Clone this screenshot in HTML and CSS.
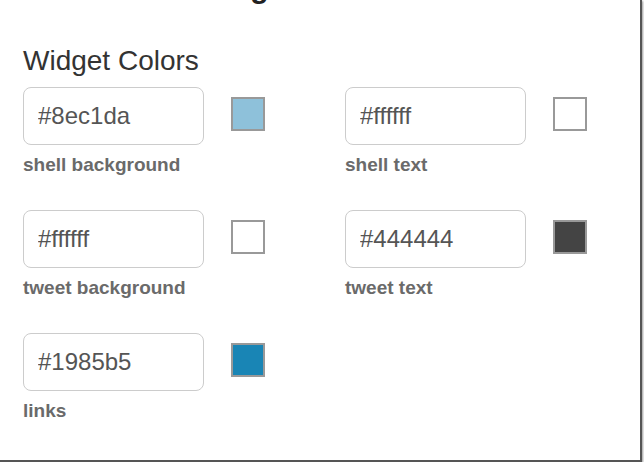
FILE: index.html
```html
<!DOCTYPE html>
<html lang="en">
<head>
    <meta charset="UTF-8">
    <meta name="viewport" content="width=device-width, initial-scale=1.0">
    <title>Widget Colors</title>
    <link rel="stylesheet" href="styles.css">
</head>
<body>
    <div class="frame">
        <h2 class="page-title">Branding</h2>

        <div class="colors">
            <h3>Widget Colors</h3>

            <div class="color-grid">
                <div class="field">
                    <div class="field-row">
                        <input class="hex" type="text" value="#8ec1da">
                        <span class="swatch swatch-shell"></span>
                    </div>
                    <label>shell background</label>
                </div>
                <div class="field">
                    <div class="field-row">
                        <input class="hex" type="text" value="#ffffff">
                        <span class="swatch swatch-white"></span>
                    </div>
                    <label>shell text</label>
                </div>
                <div class="field">
                    <div class="field-row">
                        <input class="hex" type="text" value="#ffffff">
                        <span class="swatch swatch-white"></span>
                    </div>
                    <label>tweet background</label>
                </div>
                <div class="field">
                    <div class="field-row">
                        <input class="hex" type="text" value="#444444">
                        <span class="swatch swatch-text"></span>
                    </div>
                    <label>tweet text</label>
                </div>
                <div class="field">
                    <div class="field-row">
                        <input class="hex" type="text" value="#1985b5">
                        <span class="swatch swatch-links"></span>
                    </div>
                    <label>links</label>
                </div>
            </div>
        </div>
    </div>
</body>
</html>
```

FILE: styles.css
```css
body {
    margin: 0;
    font-family: "Liberation Sans", Arial, sans-serif;
    background-color: #fff;
}

.frame {
    width: 640px;
    height: 460px;
    overflow: hidden;
    background-color: #fff;
    border-right: 2px solid #555;
    border-bottom: 2px solid #555;
    box-shadow: 1px 1px 2px #999;
}

.page-title {
    margin: -30px 0 0 0;
    padding-left: 137px;
    font-size: 30px;
    line-height: 36px;
    font-weight: bold;
    color: #222;
}

.colors {
    padding-left: 23px;
    margin-top: 39px;
}

.colors h3 {
    margin: 0 0 10px 0;
    font-size: 28px;
    line-height: 32px;
    font-weight: normal;
    color: #333;
}

.color-grid {
    display: grid;
    grid-template-columns: 322px 1fr;
    row-gap: 34px;
}

.field-row {
    display: flex;
    align-items: flex-start;
    gap: 27px;
}

.hex {
    box-sizing: border-box;
    width: 181px;
    height: 58px;
    padding: 0 14px;
    border: 1px solid #ccc;
    border-radius: 8px;
    font-family: "Liberation Sans", Arial, sans-serif;
    font-size: 24px;
    color: #555;
    background-color: #fff;
    outline: none;
}

.swatch {
    box-sizing: border-box;
    width: 34px;
    height: 34px;
    margin-top: 10px;
    border: 2px solid #999;
}

.swatch-shell {
    background-color: #8ec1da;
}

.swatch-white {
    background-color: #fff;
}

.swatch-text {
    background-color: #444;
}

.swatch-links {
    background-color: #1985b5;
}

.field label {
    display: block;
    margin-top: 9px;
    font-size: 19px;
    line-height: 22px;
    font-weight: bold;
    color: #6a6a6a;
}
```
